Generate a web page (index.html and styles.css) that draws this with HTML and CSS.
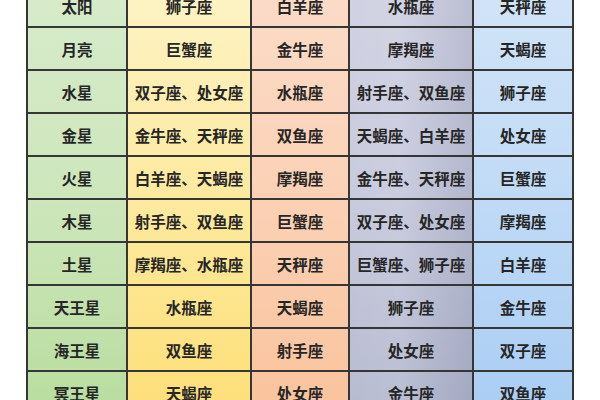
FILE: index.html
```html
<!DOCTYPE html>
<html lang="zh-CN">
<head>
<meta charset="utf-8">
<link rel="stylesheet" href="styles.css">
</head>
<body>
<div class="table">
  <div class="col c1">
    <div class="cell">太阳</div>
    <div class="cell">月亮</div>
    <div class="cell">水星</div>
    <div class="cell">金星</div>
    <div class="cell">火星</div>
    <div class="cell">木星</div>
    <div class="cell">土星</div>
    <div class="cell">天王星</div>
    <div class="cell">海王星</div>
    <div class="cell">冥王星</div>
  </div>
  <div class="col c2">
    <div class="cell">狮子座</div>
    <div class="cell">巨蟹座</div>
    <div class="cell">双子座、处女座</div>
    <div class="cell">金牛座、天秤座</div>
    <div class="cell">白羊座、天蝎座</div>
    <div class="cell">射手座、双鱼座</div>
    <div class="cell">摩羯座、水瓶座</div>
    <div class="cell">水瓶座</div>
    <div class="cell">双鱼座</div>
    <div class="cell">天蝎座</div>
  </div>
  <div class="col c3">
    <div class="cell">白羊座</div>
    <div class="cell">金牛座</div>
    <div class="cell">水瓶座</div>
    <div class="cell">双鱼座</div>
    <div class="cell">摩羯座</div>
    <div class="cell">巨蟹座</div>
    <div class="cell">天秤座</div>
    <div class="cell">天蝎座</div>
    <div class="cell">射手座</div>
    <div class="cell">处女座</div>
  </div>
  <div class="col c4">
    <div class="cell">水瓶座</div>
    <div class="cell">摩羯座</div>
    <div class="cell">射手座、双鱼座</div>
    <div class="cell">天蝎座、白羊座</div>
    <div class="cell">金牛座、天秤座</div>
    <div class="cell">双子座、处女座</div>
    <div class="cell">巨蟹座、狮子座</div>
    <div class="cell">狮子座</div>
    <div class="cell">处女座</div>
    <div class="cell">金牛座</div>
  </div>
  <div class="col c5">
    <div class="cell">天秤座</div>
    <div class="cell">天蝎座</div>
    <div class="cell">狮子座</div>
    <div class="cell">处女座</div>
    <div class="cell">巨蟹座</div>
    <div class="cell">摩羯座</div>
    <div class="cell">白羊座</div>
    <div class="cell">金牛座</div>
    <div class="cell">双子座</div>
    <div class="cell">双鱼座</div>
  </div>
</div>
</body>
</html>
```
FILE: styles.css
```css
html, body {
  margin: 0;
  padding: 0;
  background: #ffffff;
  overflow: hidden;
}
body {
  width: 600px;
  height: 400px;
  font-family: "Noto Sans CJK SC", "Noto Sans", sans-serif;
}
.table {
  display: flex;
  margin-top: -15px;
  margin-left: 26px;
  width: 546px;
  border-left: 2px solid #363636;
}
.col {
  display: flex;
  flex-direction: column;
  border-right: 2px solid #363636;
  box-sizing: border-box;
}
.cell {
  height: 43px;
  box-sizing: border-box;
  border-bottom: 2px solid #363636;
  display: flex;
  align-items: center;
  justify-content: center;
  font-size: 15.5px;
  font-weight: 700;
  color: #262626;
  white-space: nowrap;
}
.c1 {
  width: 100px;
  background: linear-gradient(180deg, #d7ebcb 0%, #cde6bb 50%, #b8dd9f 100%);
}
.c2 {
  width: 124px;
  background: linear-gradient(180deg, #fdf3c6 0%, #fdea9e 50%, #fddf78 100%);
}
.c3 {
  width: 98px;
  background: linear-gradient(180deg, #fbdcc8 0%, #fbd1b5 50%, #f9c39c 100%);
}
.c4 {
  width: 124px;
  background:
    linear-gradient(90deg, rgba(255,255,255,0.08) 0%, rgba(255,255,255,0.12) 40%, rgba(60,70,110,0.12) 100%),
    linear-gradient(180deg, #cdcfe0 0%, #c3c6da 50%, #b0b5cc 100%);
}
.c5 {
  width: 100px;
  background: linear-gradient(180deg, #d2e4f7 0%, #c0daf6 50%, #a9cdf3 100%);
}
```
